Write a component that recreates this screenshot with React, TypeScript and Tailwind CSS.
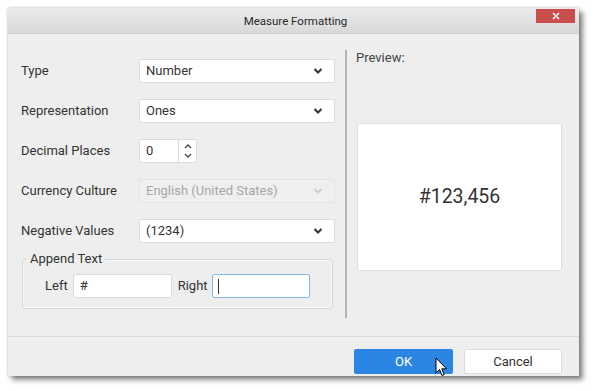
import React from "react";

const Chevron = ({ color = "#333" }: { color?: string }) => (
  <svg width="10" height="6" viewBox="0 0 10 6" className="block">
    <polyline points="1.5,1 5,4.5 8.5,1" fill="none" stroke={color} strokeWidth="2" />
  </svg>
);

const Select = ({ value, disabled }: { value: string; disabled?: boolean }) => (
  <div
    className={
      disabled
        ? "w-[196px] h-[24px] flex items-center justify-between pl-[6px] pr-[11px] bg-[#efefef] border border-[#e4e4e4] rounded-[2px] text-[#a8a8a8]"
        : "w-[196px] h-[24px] flex items-center justify-between pl-[6px] pr-[11px] bg-white border border-[#dcdcdc] rounded-[2px] text-[#333]"
    }
  >
    <span>{value}</span>
    <Chevron color={disabled ? "#cfcfcf" : "#333"} />
  </div>
);

const Row = ({ label, children }: { label: string; children: React.ReactNode }) => (
  <div className="flex items-center h-[24px]">
    <div className="w-[118px] text-[#333]">{label}</div>
    {children}
  </div>
);

export default function App() {
  return (
    <div
      className="w-[593px] h-[391px] bg-white overflow-hidden pt-[8px] pl-[8px]"
      style={{ fontFamily: "Roboto, 'Liberation Sans', sans-serif" }}
    >
      <div className="relative w-[571px] h-[368px] bg-[#eeeeee] flex flex-col text-[13px] leading-[16px] shadow-[0_0_3px_rgba(0,0,0,0.25),4px_4px_5px_rgba(0,0,0,0.45)]">
        {/* Title bar */}
        <div className="relative h-[26px] shrink-0 bg-gradient-to-b from-[#ececec] to-[#d8d8d8] border-b border-[#cccccc] flex items-center justify-center">
          <span className="text-[11.5px] text-[#2a2a2a] pl-[4px]">Measure Formatting</span>
          <div className="absolute right-[4px] top-[1px] w-[39px] h-[14px] bg-[#c94f4f] flex items-center justify-center">
            <svg width="8" height="8" viewBox="0 0 8 8">
              <path d="M1 1 L7 7 M7 1 L1 7" stroke="white" strokeWidth="1.4" />
            </svg>
          </div>
        </div>

        {/* Body */}
        <div className="flex h-[302px] shrink-0">
          <div className="w-[337px] pl-[13px] pt-[25px] flex flex-col">
            <div className="flex flex-col gap-[16px]">
              <Row label="Type">
                <Select value="Number" />
              </Row>
              <Row label="Representation">
                <Select value="Ones" />
              </Row>
              <Row label="Decimal Places">
                <div className="w-[58px] h-[24px] flex bg-white border border-[#dcdcdc] rounded-[2px]">
                  <div className="flex-1 flex items-center pl-[6px] text-[#333]">0</div>
                  <div className="w-[18px] border-l border-[#dcdcdc] flex flex-col items-center justify-center gap-[4px]">
                    <svg width="8" height="5" viewBox="0 0 8 5" className="block">
                      <polyline points="1,4 4,1 7,4" fill="none" stroke="#444" strokeWidth="1.3" />
                    </svg>
                    <svg width="8" height="5" viewBox="0 0 8 5" className="block">
                      <polyline points="1,1 4,4 7,1" fill="none" stroke="#444" strokeWidth="1.3" />
                    </svg>
                  </div>
                </div>
              </Row>
              <Row label="Currency Culture">
                <Select value="English (United States)" disabled />
              </Row>
              <Row label="Negative Values">
                <Select value="(1234)" />
              </Row>
            </div>
            <fieldset className="mt-[8px] ml-[1px] w-[311px] border border-[#d6d6d6] rounded-[3px] pt-[7px] pb-[10px] shadow-[inset_0_0_0_1px_#f7f7f7]">
              <legend className="ml-[4px] px-[3px] text-[#333]">Append Text</legend>
              <div className="flex items-center pl-[22px]">
                <span className="text-[#333]">Left</span>
                <div className="ml-[5px] w-[99px] h-[24px] bg-white border border-[#dcdcdc] rounded-[2px] flex items-center pl-[6px] text-[#333]">
                  #
                </div>
                <span className="ml-[6px] text-[#333]">Right</span>
                <div className="ml-[4px] w-[98px] h-[24px] bg-white border border-[#86b7e6] rounded-[2px] flex items-center pl-[5px]">
                  <div className="w-[1px] h-[15px] bg-[#333]" />
                </div>
              </div>
            </fieldset>
          </div>

          <div className="w-[2px] bg-[#b4b4b4] mt-[16px] h-[268px]" />

          <div className="flex-1 pl-[9px] pt-[16px] flex flex-col">
            <div className="text-[#444]">Preview:</div>
            <div className="mt-[57px] ml-[1px] w-[205px] h-[148px] bg-white border border-[#dedede] rounded-[2px] flex items-center justify-center text-[19.5px] text-[#333]">
              #123,456
            </div>
          </div>
        </div>

        {/* Footer */}
        <div className="flex-1 border-t border-[#dadada] flex justify-end items-start pt-[12px] pr-[17px] gap-[11px]">
          <div className="relative w-[99px] h-[25px] bg-[#2a86e2] rounded-[2px] flex items-center justify-center text-white">
            OK
          </div>
          <div className="w-[98px] h-[25px] bg-white border border-[#dcdcdc] rounded-[2px] flex items-center justify-center text-[#333]">
            Cancel
          </div>
        </div>

        {/* Mouse cursor */}
        <svg
          className="absolute left-[427px] top-[349px]"
          width="13"
          height="20"
          viewBox="0 0 13 20"
        >
          <path
            d="M1 1 L1 16 L4.5 12.5 L7 18.5 L9.2 17.6 L6.8 11.8 L11.5 11.8 Z"
            fill="white"
            stroke="black"
            strokeWidth="1"
            strokeLinejoin="round"
          />
        </svg>
      </div>
    </div>
  );
}
